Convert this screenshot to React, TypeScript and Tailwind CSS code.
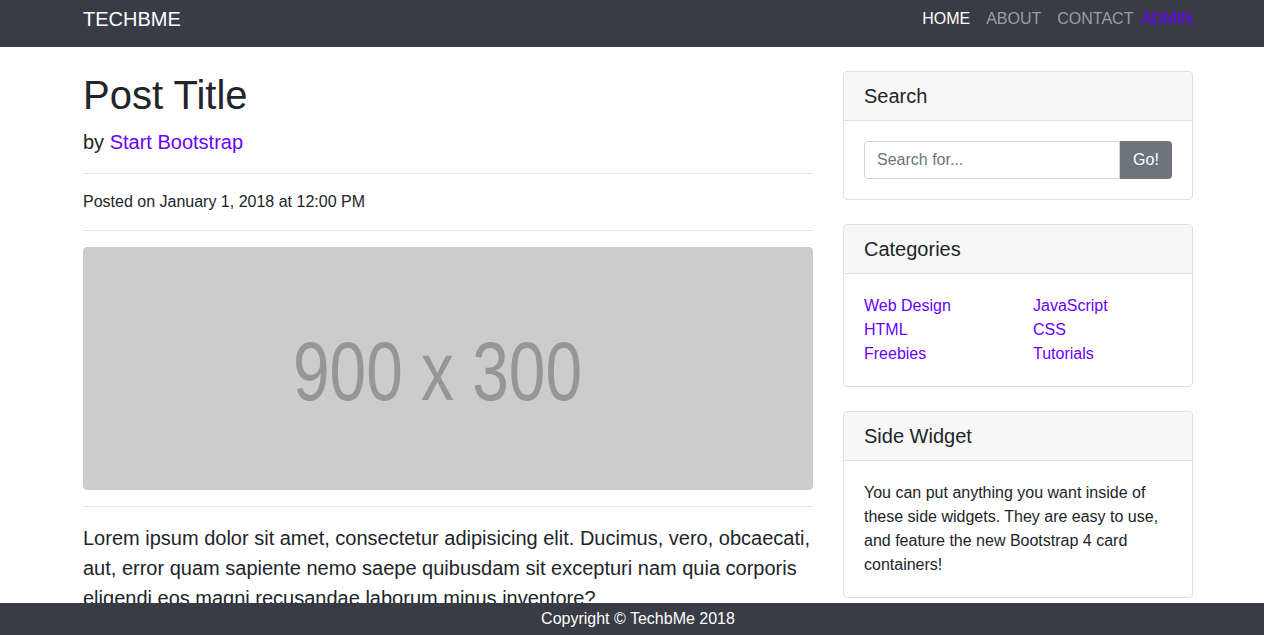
import React from 'react';

const navLinks = [
  { label: 'HOME', active: true },
  { label: 'ABOUT', active: false },
  { label: 'CONTACT', active: false },
];

const categories = [
  ['Web Design', 'HTML', 'Freebies'],
  ['JavaScript', 'CSS', 'Tutorials'],
];

const Card: React.FC<{ title: string; children: React.ReactNode }> = ({ title, children }) => (
  <div className="mb-6 rounded border border-[#dfdfdf] bg-white">
    <div className="border-b border-[#dfdfdf] bg-[#f7f7f7] px-5 py-3 rounded-t">
      <h5 className="text-[20px] leading-[24px] text-[#212529]">{title}</h5>
    </div>
    <div className="p-5">{children}</div>
  </div>
);

const App: React.FC = () => {
  return (
    <div className="min-h-[635px] bg-white font-['Liberation_Sans',Arial,sans-serif] text-[#212529]">
      {/* Navigation */}
      <nav className="h-[47px] w-full bg-[#393c45]">
        <div className="ml-[83px] flex w-[1110px] items-start justify-between pt-[6px]">
          <a href="#" className="text-[20px] leading-[26px] text-white">
            TECHBME
          </a>
          <ul className="mt-[1px] flex text-[16px] leading-[24px]">
            {navLinks.map((l) => (
              <li key={l.label}>
                <a href="#" className={`px-2 ${l.active ? 'text-white' : 'text-[#9c9da2]'}`}>
                  {l.label}
                </a>
              </li>
            ))}
            <li>
              <a href="#" className="text-[#6a00ff]">
                ADMIN
              </a>
            </li>
          </ul>
        </div>
      </nav>

      {/* Page content */}
      <div className="ml-[83px] flex w-[1110px] gap-[30px]">
        <div className="w-[730px] shrink-0">
          <h1 className="mt-6 mb-2 text-[40px] leading-[48px]">Post Title</h1>
          <p className="text-[20px] leading-[30px]">
            by{' '}
            <a href="#" className="text-[#6a00ff]">
              Start Bootstrap
            </a>
          </p>
          <hr className="my-4 border-t border-[#e6e6e6]" />
          <p className="text-[16px] leading-[24px]">Posted on January 1, 2018 at 12:00 PM</p>
          <hr className="my-4 border-t border-[#e6e6e6]" />
          <svg viewBox="0 0 730 243" className="block h-[243px] w-[730px] rounded">
            <rect width="730" height="243" rx="4" fill="#cccccc" />
            <text
              x="210"
              y="153"
              fill="#969696"
              fontSize="84"
              fontFamily="'Liberation Sans', Arial, sans-serif"
              textLength="289"
              lengthAdjust="spacingAndGlyphs"
            >
              900 x 300
            </text>
          </svg>
          <hr className="my-4 border-t border-[#e6e6e6]" />
          <p className="text-[20px] leading-[30px]">
            Lorem ipsum dolor sit amet, consectetur adipisicing elit. Ducimus, vero, obcaecati, aut, error quam
            sapiente nemo saepe quibusdam sit excepturi nam quia corporis eligendi eos magni recusandae laborum
            minus inventore?
          </p>
        </div>

        {/* Sidebar */}
        <div className="mt-6 w-[350px] shrink-0">
          <Card title="Search">
            <div className="flex">
              <input
                type="text"
                placeholder="Search for..."
                className="h-[38px] w-[256px] rounded-l border border-[#ced4da] px-3 text-[16px] text-[#495057] outline-none placeholder:text-[#6c757d]"
              />
              <button className="h-[38px] w-[52px] rounded-r bg-[#6c757d] text-[16px] text-white">Go!</button>
            </div>
          </Card>

          <Card title="Categories">
            <div className="flex">
              {categories.map((col, i) => (
                <ul key={i} className="w-[169px] shrink-0 text-[16px] leading-[24px]">
                  {col.map((c) => (
                    <li key={c}>
                      <a href="#" className="text-[#6a00ff]">
                        {c}
                      </a>
                    </li>
                  ))}
                </ul>
              ))}
            </div>
          </Card>

          <Card title="Side Widget">
            <p className="text-[16px] leading-[24px]">
              You can put anything you want inside of these side widgets. They are easy to use, and feature the
              new Bootstrap 4 card containers!
            </p>
          </Card>
        </div>
      </div>

      {/* Footer */}
      <footer className="fixed bottom-0 left-0 h-[32px] w-full bg-[#393c45]">
        <p className="ml-[83px] w-[1110px] text-center text-[16px] leading-[32px] text-white">
          Copyright © TechbMe 2018
        </p>
      </footer>
    </div>
  );
};

export default App;
